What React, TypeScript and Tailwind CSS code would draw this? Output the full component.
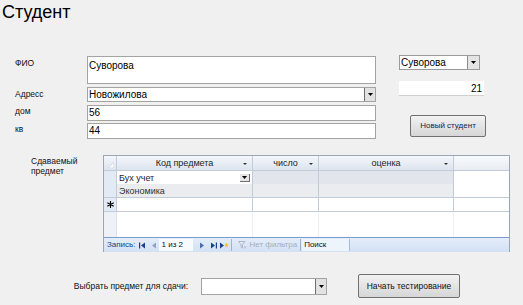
import React from "react";

function Arrow({ className = "" }: { className?: string }) {
  return (
    <svg width="5" height="3" viewBox="0 0 5 3" className={className}>
      <path d="M0 0H5L2.5 3Z" fill="#000" />
    </svg>
  );
}

function DropBtn() {
  return (
    <div className="w-[11px] self-stretch bg-[#e2e2e2] border-l border-[#6d6d6d] flex items-center justify-center">
      <Arrow />
    </div>
  );
}

function Label({ children, pt = "pt-[3px]" }: { children: React.ReactNode; pt?: string }) {
  return <div className={`w-[72px] text-[8.5px] leading-[10px] text-[#111] ${pt}`}>{children}</div>;
}

function NavTri({ dir, bar = false, color = "#15428b" }: { dir: "l" | "r"; bar?: boolean; color?: string }) {
  return (
    <svg width={bar ? 7 : 4} height="7" viewBox={bar ? "0 0 7 7" : "0 0 4 7"}>
      {dir === "l" ? (
        bar ? (
          <>
            <rect x="0" y="0.5" width="1.2" height="6" fill={color} />
            <path d="M6 0.5V6.5L2 3.5Z" fill={color} />
          </>
        ) : (
          <path d="M4 0.5V6.5L0 3.5Z" fill={color} />
        )
      ) : bar ? (
        <>
          <path d="M1 0.5V6.5L5 3.5Z" fill={color} />
          <rect x="5.8" y="0.5" width="1.2" height="6" fill={color} />
        </>
      ) : (
        <path d="M0 0.5V6.5L4 3.5Z" fill={color} />
      )}
    </svg>
  );
}

export default function App() {
  const hdr = "bg-gradient-to-b from-[#f4f7fb] to-[#dde4ee] border-r border-[#c2ccd9]";
  const grid = "grid grid-cols-[13px_136px_66px_135px_1fr]";
  return (
    <div className="w-[523px] h-[305px] bg-[#f0f0f0] overflow-hidden text-black font-['Liberation_Sans',Arial,sans-serif]">
      <div className="pl-[2px] pt-[3px] text-[18px] leading-[18px]">Студент</div>

      {/* main block */}
      <div className="mt-[34px] flex">
        <div className="ml-[15px] flex flex-col">
          <div className="flex mt-[1px]">
            <Label pt="pt-[2px]">ФИО</Label>
            <div className="w-[289px] h-[28px] bg-white border border-[#a3a3a3] px-[1px] pt-[3px] text-[10px] leading-[12px]">
              Суворова
            </div>
          </div>
          <div className="flex mt-[3px]">
            <Label pt="pt-[2px]">Адресс</Label>
            <div className="w-[289px] h-[15px] bg-white border border-[#a3a3a3] flex">
              <div className="flex-1 px-[1px] text-[10px] leading-[13px]">Новожилова</div>
              <DropBtn />
            </div>
          </div>
          <div className="flex mt-[3px]">
            <Label pt="pt-[1px]">дом</Label>
            <div className="w-[289px] h-[16px] bg-white border border-[#a3a3a3] px-[1px] text-[10px] leading-[14px]">
              56
            </div>
          </div>
          <div className="flex mt-[2px]">
            <Label pt="pt-[1px]">кв</Label>
            <div className="w-[289px] h-[16px] bg-white border border-[#a3a3a3] px-[1px] text-[10px] leading-[14px]">
              44
            </div>
          </div>
        </div>

        <div className="ml-[23px] flex flex-col items-start">
          <div className="w-[81px] h-[15px] bg-white border border-[#9a9a9a] flex">
            <div className="flex-1 px-[1px] text-[10px] leading-[13px]">Суворова</div>
            <div className="w-[12px] self-stretch bg-[#e4e4e4] border-l border-[#8a8a8a] flex items-center justify-center">
              <Arrow />
            </div>
          </div>
          <div className="mt-[11px] w-[85px] h-[15px] bg-white border-b border-[#d0d0d0] text-right pr-[2px] text-[10px] leading-[15px]">
            21
          </div>
          <div className="mt-[19px] ml-[11px] w-[76px] h-[22px] rounded-[2px] border border-[#707070] bg-gradient-to-b from-[#f2f2f2] to-[#d6d6d6] flex items-center justify-center text-[8px] text-[#1c1c48]">
            Новый студент
          </div>
        </div>
      </div>

      {/* datasheet section */}
      <div className="mt-[16px] flex">
        <div className="ml-[31px] w-[72px] text-[8.5px] leading-[10px] pt-[1px] text-[#111]">
          Сдаваемый
          <br />
          предмет
        </div>
        <div className="w-[407px] h-[97px] border border-[#9aa6b6] border-b-0 bg-white flex flex-col text-[9px] text-[#1e1e1e]">
          {/* header */}
          <div className={`${grid} h-[15px] border-b border-[#c2ccd9]`}>
            <div className={`${hdr} relative`}>
              <svg width="6" height="6" viewBox="0 0 6 6" className="absolute right-[2px] bottom-[2px]">
                <path d="M6 0V6H0Z" fill="#f8fafc" stroke="#b8c3d2" strokeWidth="0.5" />
              </svg>
            </div>
            <div className={`${hdr} flex items-center justify-center relative`}>
              <span className="leading-[14px]">Код предмета</span>
              <svg width="4" height="2" viewBox="0 0 4 2" className="absolute right-[5px] top-[7px]">
                <path d="M0 0H4L2 2Z" fill="#333" />
              </svg>
            </div>
            <div className={`${hdr} flex items-center justify-center relative`}>
              <span className="leading-[14px]">число</span>
              <svg width="4" height="2" viewBox="0 0 4 2" className="absolute right-[5px] top-[7px]">
                <path d="M0 0H4L2 2Z" fill="#333" />
              </svg>
            </div>
            <div className={`${hdr} flex items-center justify-center relative`}>
              <span className="leading-[14px]">оценка</span>
              <svg width="4" height="2" viewBox="0 0 4 2" className="absolute right-[5px] top-[7px]">
                <path d="M0 0H4L2 2Z" fill="#333" />
              </svg>
            </div>
            <div className="bg-gradient-to-b from-[#f7f9fc] to-[#e8edf3]" />
          </div>
          {/* row 1 */}
          <div className={`${grid} h-[13px]`}>
            <div className="bg-[#e2eaf5] border-r border-[#c2ccd9]" />
            <div className="bg-white border-r border-[#c2ccd9] flex items-center pl-[2px] pr-[2px]">
              <span className="flex-1 leading-[12px]">Бух учет</span>
              <div className="w-[10px] h-[8px] bg-[#e6e6e6] border-b border-r border-[#707070] flex items-center justify-center">
                <svg width="5" height="3" viewBox="0 0 5 3">
                  <path d="M0 0H5L2.5 3Z" fill="#000" />
                </svg>
              </div>
            </div>
            <div className="bg-[#e2e6ec] border-r border-[#c2ccd9]" />
            <div className="bg-[#e2e6ec] border-r border-[#c2ccd9]" />
            <div className="bg-white" />
          </div>
          {/* row 2 */}
          <div className={`${grid} h-[14px] border-b border-[#c2ccd9]`}>
            <div className="bg-[#e2eaf5] border-r border-[#c2ccd9]" />
            <div className="bg-[#eaecf0] border-r border-[#c2ccd9] flex items-center pl-[2px] leading-[12px] text-[#333]">
              Экономика
            </div>
            <div className="bg-[#eaecf0] border-r border-[#c2ccd9]" />
            <div className="bg-[#eaecf0] border-r border-[#c2ccd9]" />
            <div className="bg-white" />
          </div>
          {/* new row */}
          <div className={`${grid} h-[14px] border-b border-[#c2ccd9]`}>
            <div className="bg-[#e2eaf5] border-r border-[#c2ccd9] flex items-center justify-center">
              <svg width="7" height="7" viewBox="0 0 7 7">
                <path d="M3.5 0V7M0.3 1.7L6.7 5.3M6.7 1.7L0.3 5.3" stroke="#000" strokeWidth="1.1" />
              </svg>
            </div>
            <div className="border-r border-[#c2ccd9]" />
            <div className="border-r border-[#c2ccd9]" />
            <div className="border-r border-[#c2ccd9]" />
            <div />
          </div>
          {/* empty area */}
          <div className={`${grid} flex-1`}>
            <div className="bg-[#eef2f8] border-r border-[#dde3eb]" />
            <div className="border-r border-[#eceff3]" />
            <div className="border-r border-[#eceff3]" />
            <div className="border-r border-[#eceff3]" />
            <div />
          </div>
          {/* nav bar */}
          <div className="h-[15px] border-t border-[#7b9ccf] bg-gradient-to-b from-[#e4edf9] to-[#d3e1f4] flex items-center text-[8px] leading-[10px]">
            <span className="ml-[3px] text-[#15428b]">Запись:</span>
            <span className="ml-[4px] flex items-center"><NavTri dir="l" bar /></span>
            <span className="ml-[6px] flex items-center"><NavTri dir="l" color="#8aa3c6" /></span>
            <div className="ml-[3px] w-[34px] h-[12px] bg-[#f7fafe] flex items-center pl-[2px] text-[#111]">1 из 2</div>
            <span className="ml-[7px] flex items-center"><NavTri dir="r" color="#4a6fa8" /></span>
            <span className="ml-[6px] flex items-center"><NavTri dir="r" bar /></span>
            <span className="ml-[3px] flex items-center">
              <svg width="9" height="7" viewBox="0 0 9 7">
                <path d="M0 0.5V6.5L4 3.5Z" fill="#15428b" />
                <path d="M6.5 0.5L7.2 2.3L9 2.5L7.6 3.6L8 5.5L6.5 4.5L5 5.5L5.4 3.6L4.2 2.5L5.8 2.3Z" fill="#f2c230" />
              </svg>
            </span>
            <div className="ml-[2px] w-px h-[12px] bg-[#9fb4d2]" />
            <span className="ml-[6px] flex items-center">
              <svg width="9" height="8" viewBox="0 0 9 8">
                <path d="M0.5 0.5H7L4.5 3.5V7L3 6V3.5Z" fill="none" stroke="#a9b3c2" strokeWidth="0.9" />
                <path d="M6 5L8.5 7.5M8.5 5L6 7.5" stroke="#b7bec9" strokeWidth="0.9" />
              </svg>
            </span>
            <span className="ml-[2px] text-[#a4adba]">Нет фильтра</span>
            <div className="ml-[3px] w-px h-[12px] bg-[#9fb4d2]" />
            <div className="ml-[1px] w-[48px] h-[12px] bg-[#eef4fc] border-r border-[#a8bcd8] flex items-center pl-[2px] text-[#111]">
              Поиск
            </div>
          </div>
        </div>
      </div>

      {/* bottom */}
      <div className="mt-[22px] flex items-center">
        <div className="w-[188px] text-right text-[8.5px] leading-[10px] text-[#111]">Выбрать предмет для сдачи:</div>
        <div className="ml-[13px] w-[126px] h-[17px] bg-white border border-[#a3a3a3] flex">
          <div className="flex-1" />
          <DropBtn />
        </div>
        <div className="ml-[31px] w-[102px] h-[24px] rounded-[2px] border border-[#707070] bg-gradient-to-b from-[#f2f2f2] to-[#d6d6d6] flex items-center justify-center text-[8.5px] text-[#111]">
          Начать тестирование
        </div>
      </div>
    </div>
  );
}
